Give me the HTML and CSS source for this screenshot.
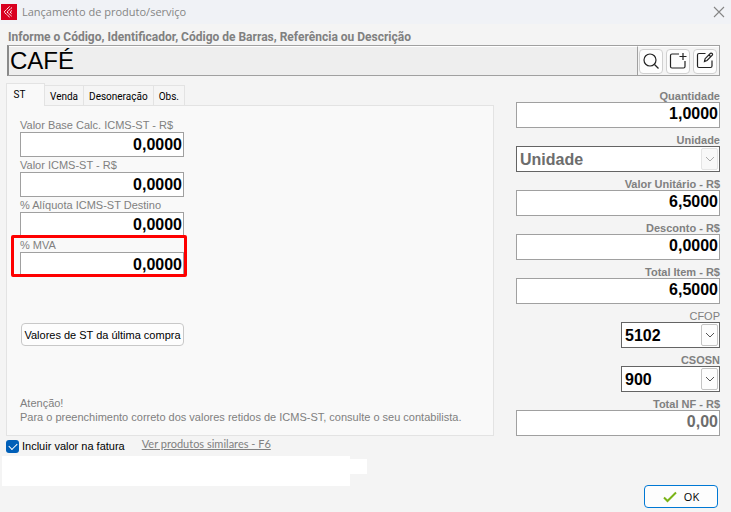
FILE: index.html
```
<!DOCTYPE html>
<html lang="pt-BR">
	<head>
		<meta charset="utf-8">
		<title>Lançamento de produto/serviço</title>
		<link rel="stylesheet" href="styles.css">
	</head>
	<body>
		<header class="titlebar">
			<svg class="logo" width="16" height="16" viewBox="0 0 16 16">
				<rect width="16" height="16" fill="#d9001f"/>
				<path d="M8.500 2.500L3 8l6 5.500M11 3.500L6 8l5 4.500M11 6.500L9 8l2 1.800" fill="none" stroke="#fff" stroke-width="1" stroke-dasharray="1.800 .4"/>
			</svg>
			<h1>Lançamento de produto/serviço</h1>
			<button class="close" aria-label="Fechar">
				<svg width="12" height="12" viewBox="0 0 12 12"><path d="M1 1l10 10M11 1L1 11" stroke="#858585" stroke-width="1.100"/></svg>
			</button>
		</header>

		<main>
			<label class="search-label" for="produto">Informe o Código, Identificador, Código de Barras, Referência ou Descrição</label>
			<div class="search">
				<input id="produto" type="text" value="CAFÉ">
				<div class="tools">
					<button aria-label="Pesquisar">
						<svg width="18" height="18" viewBox="0 0 18 18"><circle cx="8" cy="8" r="6"/><path d="M12.500 12.500l4 4"/></svg>
					</button>
					<button aria-label="Novo">
						<svg width="18" height="18" viewBox="0 0 18 18"><path d="M10 2H3q-1.500 0-1.500 1.500v11q0 1.500 1.500 1.500h11.500q1.500 0 1.500-1.500V9M14 1v7M10.500 4.500h7"/></svg>
					</button>
					<button aria-label="Editar">
						<svg width="18" height="18" viewBox="0 0 18 18"><path d="M9.500 1.500H3Q1.500 1.500 1.500 3v11q0 1.500 1.500 1.500h11.500q1.500 0 1.500-1.500V8.500M8.500 9.500l.6-2.800L14.500 1.300q.8-.6 1.600.2t.2 1.600L11 8.500zM13 3l2 2"/></svg>
					</button>
				</div>
			</div>

			<div class="columns">
				<div class="left">
					<div class="tabs" role="tablist">
						<button class="active" role="tab" aria-selected="true">ST</button>
						<button role="tab">Venda</button>
						<button role="tab">Desoneração</button>
						<button role="tab">Obs.</button>
					</div>

					<section class="panel">
						<div class="st-fields">
							<div class="field">
								<label for="base">Valor Base Calc. ICMS-ST - R$</label>
								<input id="base" type="text" value="0,0000">
							</div>
							<div class="field">
								<label for="icms">Valor ICMS-ST - R$</label>
								<input id="icms" type="text" value="0,0000">
							</div>
							<div class="field">
								<label for="aliquota">% Alíquota ICMS-ST Destino</label>
								<input id="aliquota" type="text" value="0,0000">
							</div>
							<div class="field highlight">
								<label for="mva">% MVA</label>
								<input id="mva" type="text" value="0,0000">
							</div>
						</div>
						<button class="last-buy">Valores de ST da última compra</button>
						<p class="notice">Atenção!<br>Para o preenchimento correto dos valores retidos de ICMS-ST, consulte o seu contabilista.</p>
					</section>

					<div class="options">
						<input id="fatura" type="checkbox" checked>
						<label for="fatura">Incluir valor na fatura</label>
						<a href="#">Ver produtos similares - F6</a>
					</div>
					<div class="blank"></div>
				</div> <!-- end .left -->

				<div class="totals">
					<div class="field">
						<label for="qtd">Quantidade</label>
						<input id="qtd" type="text" value="1,0000">
					</div>
					<div class="field">
						<label for="unidade">Unidade</label>
						<div class="combo disabled">
							<select id="unidade" disabled><option>Unidade</option></select>
							<span class="arrow"><svg width="10" height="6" viewBox="0 0 10 6"><path d="M1 1l4 4 4-4"/></svg></span>
						</div>
					</div>
					<div class="field">
						<label for="unitario">Valor Unitário - R$</label>
						<input id="unitario" type="text" value="6,5000">
					</div>
					<div class="field">
						<label for="desconto">Desconto - R$</label>
						<input id="desconto" type="text" value="0,0000">
					</div>
					<div class="field">
						<label for="total">Total Item - R$</label>
						<input id="total" type="text" value="6,5000">
					</div>
					<div class="field">
						<label class="regular" for="cfop">CFOP</label>
						<div class="combo small">
							<select id="cfop"><option>5102</option></select>
							<span class="arrow"><svg width="10" height="6" viewBox="0 0 10 6"><path d="M1 1l4 4 4-4"/></svg></span>
						</div>
					</div>
					<div class="field">
						<label for="csosn">CSOSN</label>
						<div class="combo small">
							<select id="csosn"><option>900</option></select>
							<span class="arrow"><svg width="10" height="6" viewBox="0 0 10 6"><path d="M1 1l4 4 4-4"/></svg></span>
						</div>
					</div>
					<div class="field">
						<label for="nf">Total NF - R$</label>
						<input id="nf" class="muted" type="text" value="0,00" readonly>
					</div>
					<button class="ok">
						<svg width="14" height="12" viewBox="0 0 14 12"><path d="M1 6.500L4.500 10 13 1.500" fill="none" stroke="#7ab317" stroke-width="2"/></svg>
						OK
					</button>
				</div> <!-- end .totals -->
			</div>
		</main>
	</body>
</html>
```
FILE: styles.css
```
* {
	box-sizing: border-box;
}

body {
	margin: 0;
	background: #f4f4f4;
	font: 11px/14px "Liberation Sans", Arial, sans-serif;
	color: #000;
}

button, input, select {
	font: inherit;
	color: inherit;
	margin: 0;
	border-radius: 0;
}

button {
	padding: 0;
}

.titlebar {
	display: flex;
	align-items: center;
	height: 24px;
	padding: 0 6px 0 1px;
	background: #f0f2f6;
}

.titlebar h1 {
	flex: 1;
	margin: 0 0 0 5px;
	font: 11px/16px "Open Sans", sans-serif;
	color: #858585;
}

.close {
	display: flex;
	border: 0;
	background: none;
}

main {
	padding: 6px 11px 0 6px;
}

.search-label {
	display: block;
	margin-left: 2px;
	font: bold 12px/15px Roboto, sans-serif;
	color: #808080;
}

.search {
	display: flex;
	height: 31px;
	margin-left: 1px;
	border: 1px solid #a0a0a0;
	border-left: 2px solid #8a8a8a;
}

.search input {
	flex: 1;
	min-width: 0;
	padding: 0 1px;
	border: 0;
	border-top: 1px solid #fff;
	border-right: 1px solid #a0a0a0;
	background: #eee;
	font-size: 24px;
	outline: none;
}

.tools {
	display: flex;
	align-items: center;
	gap: 3px;
	padding: 0 2px 0 1px;
	border-top: 1px solid #fff;
}

.tools button {
	display: flex;
	align-items: center;
	justify-content: center;
	width: 24px;
	height: 25px;
	border: 1px solid #d0d0d0;
	border-radius: 4px;
	background: #fdfdfd;
}

.tools svg {
	fill: none;
	stroke: #222;
	stroke-width: 1.2;
}

.columns {
	display: grid;
	grid-template-columns: 1fr 204px;
	gap: 22px;
}

.left {
	padding-top: 7px;
}

.tabs {
	display: flex;
	align-items: flex-end;
}

.tabs button {
	height: 20px;
	padding: 2px 5px 0;
	border: 1px solid #e3e3e3;
	border-bottom: 0;
	border-left: 0;
	background: #f5f5f5;
	font: 10px/14px Roboto, sans-serif;
}

.tabs .active {
	position: relative;
	width: 39px;
	height: 23px;
	margin-bottom: -1px;
	padding: 0 12px 0 0;
	border-left: 1px solid #e3e3e3;
	background: #f9f9f9;
}

.panel {
	height: 331px;
	padding: 12px 13px;
	border: 1px solid #e3e3e3;
	background: #f9f9f9;
	color: #808080;
}

.st-fields {
	display: flex;
	flex-direction: column;
	gap: 1px;
	width: 164px;
}

.field label {
	display: block;
}

.field input {
	display: block;
	width: 100%;
	height: 26px;
	padding: 0 1px 2px;
	border: 1px solid #a0a0a0;
	background: #fff;
	font-size: 16px;
	font-weight: bold;
	color: #000;
	text-align: right;
	outline: none;
}

.st-fields .field input {
	height: 25px;
	padding-bottom: 0;
}

.highlight {
	position: relative;
}

.highlight::after {
	content: "";
	position: absolute;
	top: -3px;
	right: -3px;
	bottom: 0;
	left: -9px;
	border: 3px solid #fe0000;
	border-radius: 2px;
}

.last-buy {
	display: block;
	width: 163px;
	height: 23px;
	margin: 46px 0 50px 1px;
	border: 1px solid #c8c8c8;
	border-radius: 4px;
	background: #fdfdfd;
	color: #000;
}

.notice {
	margin: 0;
}

.options {
	display: flex;
	align-items: center;
	height: 20px;
}

.options input {
	appearance: none;
	position: relative;
	width: 13px;
	height: 13px;
	border-radius: 3px;
	background: #005fb8;
}

.options input:checked::after {
	content: "";
	position: absolute;
	top: 3px;
	left: 3px;
	width: 7px;
	height: 4px;
	border: solid #fff;
	border-width: 0 0 1px 1px;
	transform: rotate(-45deg);
}

.options label {
	margin: 0 17px 0 3px;
}

.options a {
	margin-bottom: 4px;
	color: #808080;
	font: 11px/14px Lato, sans-serif;
}

.blank {
	position: relative;
	width: 348px;
	height: 30px;
	margin-left: -4px;
	background: #fff;
}

.blank::after {
	content: "";
	position: absolute;
	top: 3px;
	left: 100%;
	width: 17px;
	height: 15px;
	background: #fff;
}

.totals {
	display: flex;
	flex-direction: column;
	gap: 6px;
	padding-top: 14px;
}

.totals label {
	line-height: 12px;
	font-weight: bold;
	color: #808080;
	text-align: right;
}

.totals .regular {
	font-weight: normal;
}

.totals .muted {
	color: #6d6d6d;
}

.combo {
	position: relative;
	height: 26px;
}

.combo.small {
	width: 99px;
	margin-left: auto;
}

.combo select {
	appearance: none;
	width: 100%;
	height: 100%;
	padding: 2px 3px 0;
	border: 1px solid #646464;
	background: #fff;
	font-size: 16px;
	font-weight: bold;
	opacity: 1;
}

.disabled select {
	color: #6d6d6d;
}

.arrow {
	position: absolute;
	top: 2px;
	right: 2px;
	bottom: 2px;
	display: flex;
	align-items: center;
	justify-content: center;
	width: 17px;
	border: 1px solid #c4c4c4;
	border-radius: 2px;
	background: #fdfdfd;
	pointer-events: none;
}

.arrow path {
	fill: none;
	stroke: #555;
}

.disabled .arrow {
	border-color: #e4e4e4;
	background: #f8f8f8;
}

.disabled .arrow path {
	stroke: #aaa;
}

.ok {
	display: flex;
	align-items: center;
	justify-content: center;
	gap: 7px;
	align-self: flex-end;
	width: 74px;
	height: 23px;
	margin: 43px 2px 0 0;
	border: 1px solid #0078d4;
	border-radius: 4px;
	background: #fdfdfd;
	font: 11px/14px "Open Sans", sans-serif;
}
```
